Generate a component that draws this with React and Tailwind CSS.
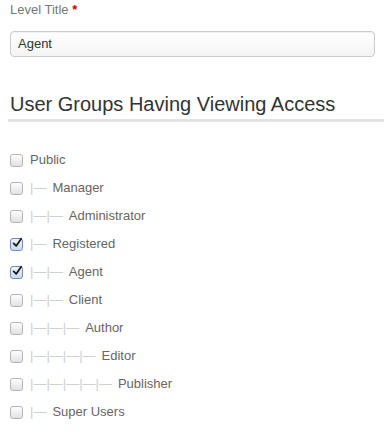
const groups = [
  { name: 'Public', depth: 0, checked: false },
  { name: 'Manager', depth: 1, checked: false },
  { name: 'Administrator', depth: 2, checked: false },
  { name: 'Registered', depth: 1, checked: true },
  { name: 'Agent', depth: 2, checked: true },
  { name: 'Client', depth: 2, checked: false },
  { name: 'Author', depth: 3, checked: false },
  { name: 'Editor', depth: 4, checked: false },
  { name: 'Publisher', depth: 5, checked: false },
  { name: 'Super Users', depth: 1, checked: false },
]

const Box = ({ checked }) => (
  <span
    className={
      'w-[13px] h-[13px] rounded-[3px] border flex items-center justify-center shrink-0 ' +
      (checked
        ? 'border-[#6c8fbf] bg-gradient-to-b from-[#eef4fc] to-[#c9daf2]'
        : 'border-[#b5b5b5] bg-gradient-to-b from-[#fdfdfd] to-[#e2e2e2]')
    }
  >
    {checked && (
      <svg viewBox="0 0 12 12" className="w-[12px] h-[12px] -mt-[3px] ml-[1px]">
        <path d="M2 6.5 L5 9.5 L11 1" fill="none" stroke="#1a1a1a" strokeWidth="2.2" strokeLinecap="round" strokeLinejoin="round" />
      </svg>
    )}
  </span>
)

export default function App() {
  return (
    <div className="w-[384px] h-[435px] bg-white font-['Liberation_Sans',Arial,sans-serif] overflow-hidden">
      <div className="pl-[10px] pt-[1px] text-[13px] leading-[18px] text-[#777]">
        Level Title <span className="text-[#c00] font-bold">*</span>
      </div>
      <div className="mt-[12px] ml-[10px] w-[365px] h-[26px] border border-[#ccc] rounded-[4px] bg-gradient-to-b from-[#fff] to-[#f4f4f4] shadow-[inset_0_1px_1px_rgba(0,0,0,0.06)] flex items-center px-[7px] text-[13px] text-[#333]">
        Agent
      </div>
      <div className="mt-[35px] pl-[10px] text-[20px] leading-[24px] text-[#333]">
        User Groups Having Viewing Access
      </div>
      <div className="mt-[3px] ml-[8px] h-[3px] bg-[#e3e3e3]" />
      <div className="mt-[29px] flex flex-col gap-[10px]">
        {groups.map((g) => (
          <label key={g.name} className="h-[18px] pl-[10px] flex items-center gap-[7px] text-[13px] text-[#666]">
            <Box checked={g.checked} />
            <span className="flex items-center">
              {g.depth > 0 && (
                <span className="text-[#d0d0d0] mr-[6px]">
                  {Array.from({ length: g.depth }).map(() => '|—').join('')}
                </span>
              )}
              {g.name}
            </span>
          </label>
        ))}
      </div>
    </div>
  )
}
